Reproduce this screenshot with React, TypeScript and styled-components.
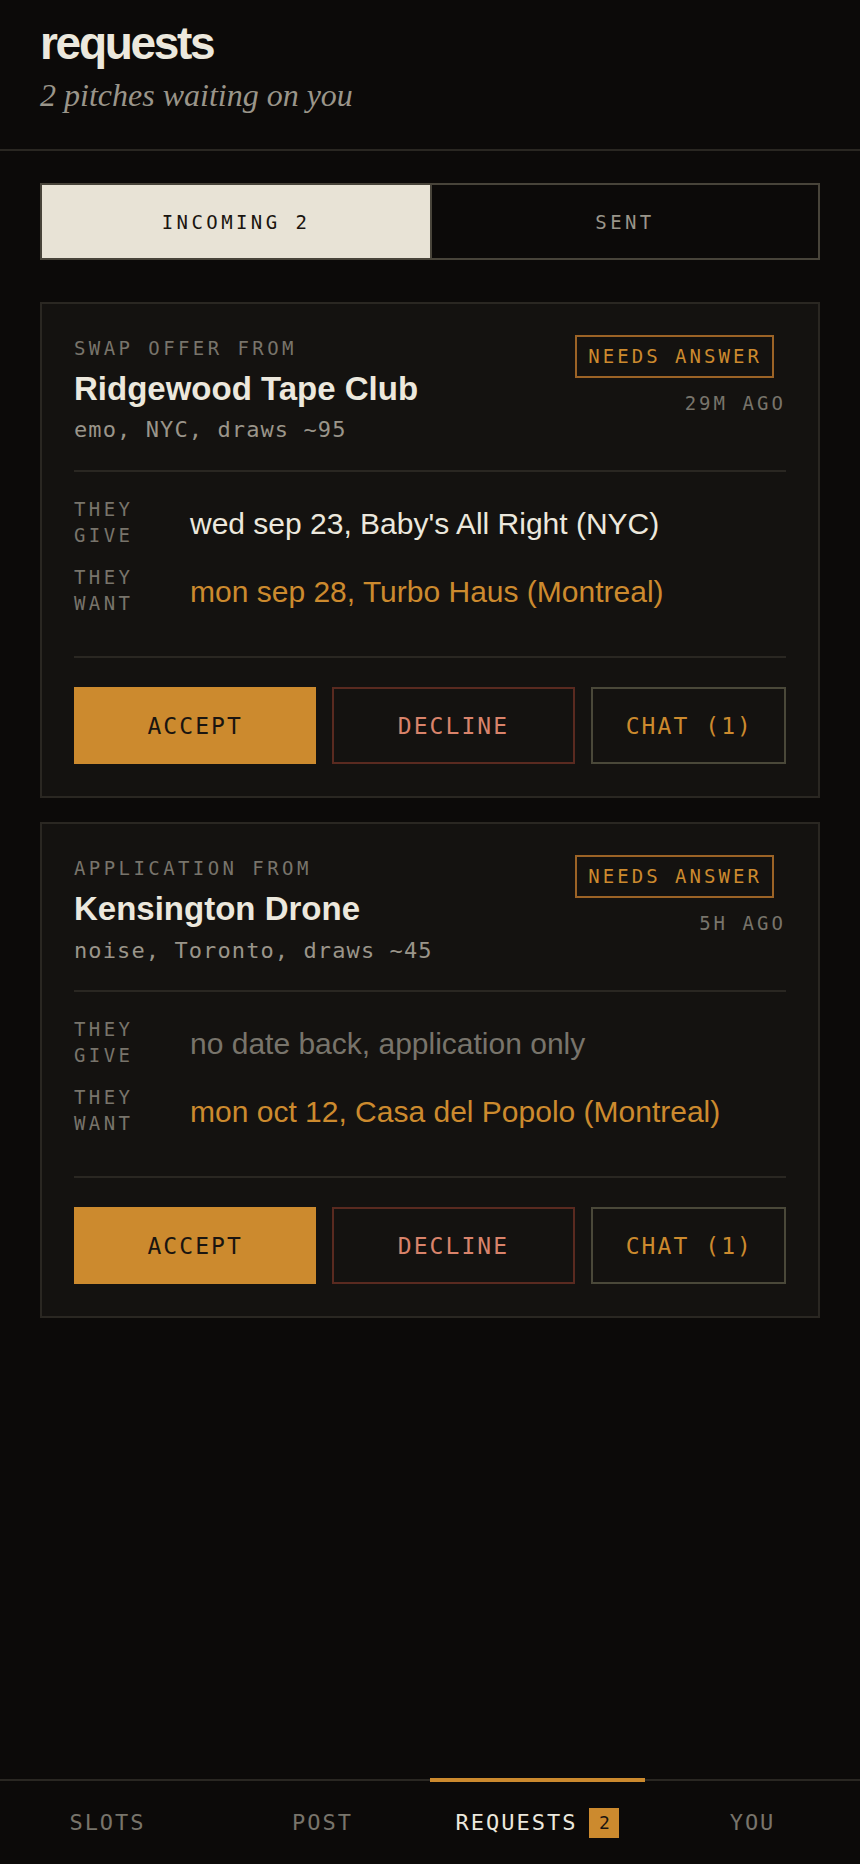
import React from "react";
import styled, { createGlobalStyle } from "styled-components";

const mono = `"DejaVu Sans Mono", "Liberation Mono", monospace`;
const sans = `"Liberation Sans", Arial, Helvetica, sans-serif`;
const serif = `"Liberation Serif", "Times New Roman", serif`;

const col = {
  page: "#0c0a09",
  card: "#141210",
  line: "#2a2722",
  tabLine: "#48443a",
  cream: "#e8e3d6",
  text: "#ece8dd",
  dim: "#78746b",
  grey: "#9a958a",
  orange: "#cc8a2e",
  orangeLine: "#9c6326",
  dark: "#1a1510",
  declineLine: "#5a2a20",
  declineText: "#d9836b",
  chatLine: "#4a4839",
};

const Global = createGlobalStyle`
  html, body { margin: 0; padding: 0; background: ${col.page}; }
  * { box-sizing: border-box; }
  button { font: inherit; }
`;

const Page = styled.div`
  min-height: 100vh;
  display: flex;
  flex-direction: column;
  background: ${col.page};
`;

const Header = styled.header`
  padding: 18px 40px 33px;
  border-bottom: 2px solid ${col.line};
`;

const Title = styled.h1`
  margin: 0;
  font-family: ${sans};
  font-weight: 700;
  font-size: 46px;
  line-height: 1.1;
  letter-spacing: -0.05em;
  color: ${col.text};
`;

const Subtitle = styled.p`
  margin: 6px 0 0;
  font-family: ${serif};
  font-style: italic;
  font-size: 32px;
  line-height: 1.3;
  color: ${col.grey};
`;

const Main = styled.main`
  flex: 1;
  padding: 32px 40px 40px;
  display: flex;
  flex-direction: column;
  gap: 42px;
`;

const Tabs = styled.div`
  display: grid;
  grid-template-columns: 1fr 1fr;
  height: 77px;
  border: 2px solid ${col.tabLine};
`;

const Tab = styled.button<{ $active?: boolean }>`
  border: 0;
  margin: 0;
  display: flex;
  align-items: center;
  justify-content: center;
  font-family: ${mono};
  font-size: 19px;
  letter-spacing: 0.18em;
  background: ${(p) => (p.$active ? col.cream : col.page)};
  color: ${(p) => (p.$active ? col.dark : col.grey)};
  & + & { border-left: 2px solid ${col.tabLine}; }
`;

const CardList = styled.div`
  display: flex;
  flex-direction: column;
  gap: 24px;
`;

const Card = styled.article`
  background: ${col.card};
  border: 2px solid ${col.line};
  padding: 32px;
`;

const CardHead = styled.div`
  display: flex;
  justify-content: space-between;
  align-items: flex-start;
`;

const Who = styled.div`
  display: flex;
  flex-direction: column;
`;

const Kicker = styled.div`
  font-family: ${mono};
  font-size: 19px;
  line-height: 1.3;
  letter-spacing: 0.18em;
  color: ${col.dim};
  text-transform: uppercase;
`;

const Name = styled.h2`
  margin: 8px 0 0;
  font-family: ${sans};
  font-weight: 700;
  font-size: 33px;
  line-height: 1.2;
  letter-spacing: 0;
  color: ${col.text};
`;

const Meta = styled.div`
  margin-top: 7px;
  font-family: ${mono};
  font-size: 22px;
  line-height: 1.4;
  letter-spacing: 0.05em;
  color: ${col.grey};
`;

const Status = styled.div`
  display: flex;
  flex-direction: column;
  align-items: flex-end;
`;

const Badge = styled.span`
  margin: -1px 12px 0 0;
  padding: 7px 10px 7px 11px;
  border: 2px solid ${col.orangeLine};
  font-family: ${mono};
  font-size: 19px;
  line-height: 1.3;
  letter-spacing: 0.16em;
  color: ${col.orange};
`;

const Time = styled.span`
  margin-top: 13px;
  font-family: ${mono};
  font-size: 19px;
  line-height: 1.3;
  letter-spacing: 0.16em;
  color: ${col.dim};
`;

const Rule = styled.hr`
  margin: 0;
  border: 0;
  height: 2px;
  background: ${col.line};
`;

const HeadRule = styled(Rule)`
  margin-top: 24px;
`;

const Terms = styled.div`
  display: flex;
  flex-direction: column;
  gap: 16px;
  padding: 24px 0 40px;
`;

const Term = styled.div`
  display: flex;
  align-items: center;
  gap: 46px;
`;

const TermLabel = styled.div`
  width: 70px;
  flex: none;
  font-family: ${mono};
  font-size: 19px;
  line-height: 26px;
  letter-spacing: 0.18em;
  color: ${col.dim};
`;

const TermValue = styled.div<{ $tone: "give" | "want" | "none" }>`
  padding-top: 4px;
  font-family: ${sans};
  font-size: 30px;
  line-height: 1.2;
  color: ${(p) =>
    p.$tone === "want" ? col.orange : p.$tone === "none" ? col.dim : col.text};
`;

const Actions = styled.div`
  display: flex;
  gap: 16px;
  margin-top: 29px;
`;

const Action = styled.button<{ $kind: "accept" | "decline" | "chat" }>`
  height: 77px;
  margin: 0;
  flex: ${(p) => (p.$kind === "chat" ? "none" : "1 1 0")};
  padding: ${(p) => (p.$kind === "chat" ? "0 31px 0 33px" : "0")};
  display: flex;
  align-items: center;
  justify-content: center;
  font-family: ${mono};
  font-size: 23px;
  letter-spacing: 0.09em;
  background: ${(p) => (p.$kind === "accept" ? col.orange : col.card)};
  border: 2px solid
    ${(p) =>
      p.$kind === "accept"
        ? col.orange
        : p.$kind === "decline"
        ? col.declineLine
        : col.chatLine};
  color: ${(p) =>
    p.$kind === "accept"
      ? col.dark
      : p.$kind === "decline"
      ? col.declineText
      : col.orange};
`;

const Nav = styled.nav`
  display: grid;
  grid-template-columns: repeat(4, 1fr);
  height: 85px;
  border-top: 2px solid ${col.line};
  background: ${col.page};
`;

const NavItem = styled.div<{ $active?: boolean }>`
  position: relative;
  display: flex;
  align-items: center;
  justify-content: center;
  font-family: ${mono};
  font-size: 22px;
  letter-spacing: 0.09em;
  color: ${(p) => (p.$active ? col.text : col.dim)};
  &::before {
    content: "";
    display: ${(p) => (p.$active ? "block" : "none")};
    position: absolute;
    left: 0;
    right: 0;
    top: -3px;
    height: 4px;
    background: ${col.orange};
  }
`;

const NavCount = styled.span`
  margin-left: 12px;
  width: 30px;
  height: 30px;
  display: inline-flex;
  align-items: center;
  justify-content: center;
  background: ${col.orange};
  color: ${col.dark};
  font-size: 18px;
  letter-spacing: 0;
`;

type Pitch = {
  kind: string;
  name: string;
  meta: string;
  ago: string;
  give: string;
  giveNone?: boolean;
  want: string;
};

const pitches: Pitch[] = [
  {
    kind: "swap offer from",
    name: "Ridgewood Tape Club",
    meta: "emo, NYC, draws ~95",
    ago: "29M AGO",
    give: "wed sep 23, Baby's All Right (NYC)",
    want: "mon sep 28, Turbo Haus (Montreal)",
  },
  {
    kind: "application from",
    name: "Kensington Drone",
    meta: "noise, Toronto, draws ~45",
    ago: "5H AGO",
    give: "no date back, application only",
    giveNone: true,
    want: "mon oct 12, Casa del Popolo (Montreal)",
  },
];

function PitchCard({ p }: { p: Pitch }) {
  return (
    <Card>
      <CardHead>
        <Who>
          <Kicker>{p.kind}</Kicker>
          <Name>{p.name}</Name>
          <Meta>{p.meta}</Meta>
        </Who>
        <Status>
          <Badge>NEEDS ANSWER</Badge>
          <Time>{p.ago}</Time>
        </Status>
      </CardHead>
      <HeadRule />
      <Terms>
        <Term>
          <TermLabel>THEY GIVE</TermLabel>
          <TermValue $tone={p.giveNone ? "none" : "give"}>{p.give}</TermValue>
        </Term>
        <Term>
          <TermLabel>THEY WANT</TermLabel>
          <TermValue $tone="want">{p.want}</TermValue>
        </Term>
      </Terms>
      <Rule />
      <Actions>
        <Action $kind="accept">ACCEPT</Action>
        <Action $kind="decline">DECLINE</Action>
        <Action $kind="chat">CHAT (1)</Action>
      </Actions>
    </Card>
  );
}

export default function App() {
  return (
    <Page>
      <Global />
      <Header>
        <Title>requests</Title>
        <Subtitle>2 pitches waiting on you</Subtitle>
      </Header>
      <Main>
        <Tabs>
          <Tab $active>INCOMING 2</Tab>
          <Tab>SENT</Tab>
        </Tabs>
        <CardList>
          {pitches.map((p) => (
            <PitchCard key={p.name} p={p} />
          ))}
        </CardList>
      </Main>
      <Nav>
        <NavItem>SLOTS</NavItem>
        <NavItem>POST</NavItem>
        <NavItem $active>
          REQUESTS<NavCount>2</NavCount>
        </NavItem>
        <NavItem>YOU</NavItem>
      </Nav>
    </Page>
  );
}
